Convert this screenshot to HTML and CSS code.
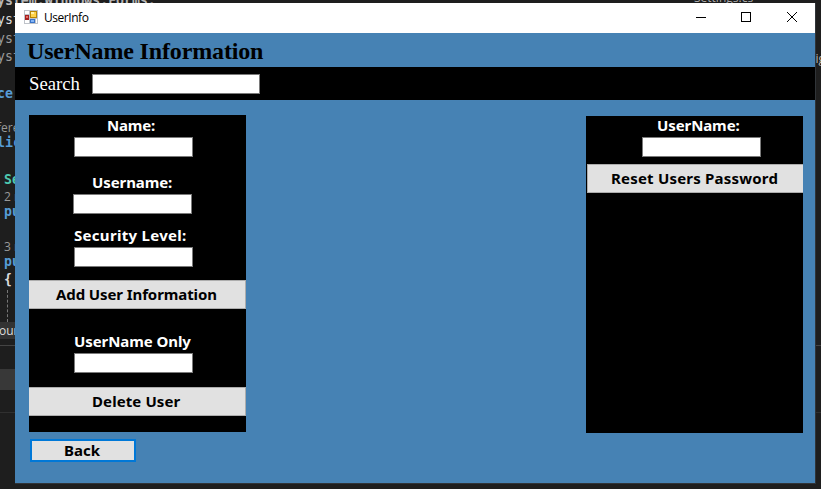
FILE: index.html
```html
<!DOCTYPE html>
<html lang="en">
<head>
<meta charset="utf-8">
<title>UserInfo</title>
<link rel="stylesheet" href="styles.css">
</head>
<body>
<div class="editor">
  <div class="code">
    <div class="line first">ystem.Windows.Forms;</div>
    <div class="line">yst</div>
    <div class="line dim">yst</div>
    <div class="line dim">yst</div>
    <div class="line keyword gap-s">ce</div>
    <div class="line lens gap-m">fere</div>
    <div class="line keyword tight">lic</div>
    <div class="line type in gap-s">Se</div>
    <div class="line lens in">2 r</div>
    <div class="line keyword in tight">pu</div>
    <div class="line lens in gap-m">3 r</div>
    <div class="line keyword in tight">pu</div>
    <div class="line in brace">{</div>
    <div class="guide"></div>
    <div class="found">oun</div>
    <div class="rule"></div>
    <div class="band"></div>
    <div class="rule faint"></div>
  </div>
  <div class="side"><span class="file">Settings.cs</span><span class="sig">ig</span></div>
</div>

<main class="window">
  <header class="titlebar">
    <svg class="app-icon" width="14" height="14" viewBox="0 0 14 14" shape-rendering="crispEdges">
      <path fill="#bfc3c9" d="M0 0h14v14H0z"/>
      <path fill="#fff" d="M1 1h4v3H1zM1 10h4v3H1zM12 9h1v4h-1z"/>
      <path fill="#a52020" d="M1 5h4v5H1z"/><path fill="#e66a5f" d="M2 6h2v2H2z"/>
      <path fill="#b98705" d="M6 1h7v7H6z"/><path fill="#ffd24a" d="M7 2h5v5H7z"/><path fill="#fff0a8" d="M7 2h3v2H7z"/>
      <path fill="#3973c9" d="M6 9h5v4H6z"/><path fill="#83b5f7" d="M7 10h3v2H7z"/>
    </svg>
    <span class="title">UserInfo</span>
    <svg class="controls" width="102" height="12" viewBox="0 0 102 12" fill="none" stroke="#000">
      <path d="M0 5.5h10M45.5.5h9v9h-9z" shape-rendering="crispEdges"/>
      <path d="M91 0l10 10M101 0L91 10"/>
    </svg>
  </header>
  <h1>UserName Information</h1>
  <div class="search"><label for="search">Search</label><input id="search"></div>
  <div class="content">
    <section class="left">
      <div class="panel users">
        <label class="name">Name:</label><input>
        <label class="username">Username:</label><input class="shifted">
        <label class="security">Security Level:</label><input>
        <button class="add">Add User Information</button>
        <label class="only">UserName Only</label><input>
        <button class="delete">Delete User</button>
      </div>
      <button class="back">Back</button>
    </section>
    <section class="panel reset">
      <label class="reset-name">UserName:</label><input>
      <button class="reset-button">Reset Users Password</button>
    </section>
  </div>
</main>
</body>
</html>
```
FILE: styles.css
```css
* { box-sizing: border-box; }
body { margin: 0; width: 821px; height: 489px; overflow: hidden; background: #1e1e1e; }

.editor { display: flex; justify-content: space-between; height: 489px; color: #dcdcdc; overflow: hidden; }
.code { width: 300px; font: 13.2px/18.5px "DejaVu Sans Mono", monospace; }
.line { height: 18.5px; white-space: pre; margin-left: -3px; }
.line.first { height: 11px; line-height: 2px; font-weight: bold; color: #b8b8b8; }
.dim { color: #9a9a9a; }
.keyword { color: #569cd6; font-weight: bold; }
.type { color: #4ec9b0; font-weight: bold; }
.brace { font-weight: bold; line-height: 16px; }
.lens { height: 15px; font: 12px/13px "Open Sans", sans-serif; color: #999; }
.in { margin-left: 4px; }
.tight { height: 17px; line-height: 14px; }
.gap-s, .gap-m { margin-top: 18px; }
.guide { width: 0; height: 32px; margin-left: 7px; border-left: 1px dashed #777; }
.found { height: 17px; font: 12px/17px "Open Sans", sans-serif; background: #333; margin-left: -1px; }
.rule { height: 1px; margin-top: 6px; background: #444; width: 821px; }
.band { height: 21px; margin-top: 23px; background: #383838; }
.rule.faint { margin-top: 22px; background: #303030; }
.side { width: 127px; font: 12px/14px "Open Sans", sans-serif; display: flex; flex-direction: column; }
.file { height: 14px; line-height: 0; margin-top: -2px; color: #aaa; }
.sig { align-self: flex-end; margin-top: 40px; margin-right: -4px; color: #b8b8b8; }

.window { position: absolute; left: 15px; top: 3px; width: 801px; height: 481px; background: #4682b4; border-right: 1px solid #303438; border-bottom: 1px solid #303438; }
.titlebar { display: flex; height: 30px; padding: 7px 17px 0 9px; background: #fff; }
.title { margin-left: 6px; font: 12px/16px "Open Sans", sans-serif; color: #000; letter-spacing: -.5px; }
.title { letter-spacing: -.45px; }
.controls { margin: 2px 0 0 auto; }
h1 { margin: 0; height: 34px; padding-left: 12px; font: bold 24px/36px "Liberation Serif", serif; letter-spacing: -.15px; color: #000; }
.search { display: flex; height: 33px; padding: 7px 0 0 14px; background: #000; color: #fff; }
.search label { width: 63px; font: 18.7px/19px "Liberation Serif", serif; }
input { display: block; width: 119px; height: 20px; margin: 0 0 0 45px; padding: 0 3px; border: 1px solid #7a7a7a; border-radius: 0; background: #fff; outline: 0; }
.search input { width: 168px; margin: 0; }
.content { display: flex; justify-content: space-between; padding: 15px 12px 0 14px; }
.panel { width: 217px; height: 317px; background: #000; }
.reset { margin-top: 1px; }
.reset input { margin-left: 56px; }
label { display: block; color: #fff; }
.panel label, button { font: bold 15px/20px "Noto Sans", sans-serif; white-space: nowrap; }
.panel label { height: 22px; }
.name { padding-left: 78px; letter-spacing: -.2px; }
.username { padding-left: 63px; margin-top: 15px; letter-spacing: -.1px; }
.users .shifted { margin-left: 44px; }
.security { padding-left: 45px; margin-top: 11px; letter-spacing: .3px; }
.only { padding-left: 45px; margin-top: 22px; letter-spacing: -.08px; }
.panel .reset-name { height: 21px; line-height: 18px; padding-left: 71px; letter-spacing: -.1px; }
button { display: block; width: 217px; height: 29px; margin: 0; padding: 0 0 2px; border: 1px solid #adadad; border-radius: 0; background: #e1e1e1; color: #000; text-align: left; }
button.add { margin-top: 13px; padding-left: 27px; border-left: 0; letter-spacing: -.1px; }
button.delete { margin-top: 14px; padding-left: 63px; border-left: 0; letter-spacing: .1px; }
button.reset-button { width: 216px; margin: 7px 0 0 1px; padding-left: 23px; border-right: 0; letter-spacing: .2px; }
button.back { width: 106px; height: 23px; margin: 7px 0 0 1px; padding: 0 0 0 32px; border: 2px solid #0078d7; line-height: 19px; }
```
